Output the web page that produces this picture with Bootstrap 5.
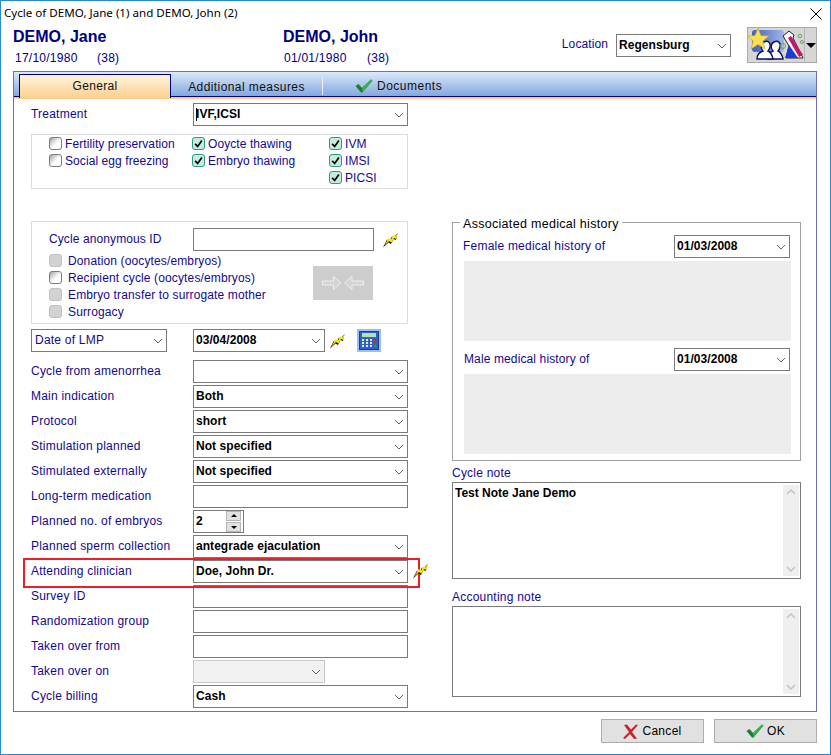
<!DOCTYPE html>
<html lang="en">
<head>
<meta charset="utf-8">
<title>Cycle</title>
<link href="https://cdn.jsdelivr.net/npm/bootstrap@5.3.0/dist/css/bootstrap.min.css" rel="stylesheet">
<style>
html,body{margin:0;background:#fff;font:12px/14px "Liberation Sans",Arial,sans-serif;color:#000}
.win{width:831px;height:755px;border:1px solid #2b87cf;overflow:hidden}
.ttl{height:24px;padding-left:3px;font-family:"Noto Sans",sans-serif;font-size:11.6px;line-height:24px}
.hdr{height:46px;padding-left:12px}
.pers{width:270px;color:#000080}
.pname{font-size:16px;font-weight:700;line-height:20px;margin-top:2px}
.pinfo{padding-left:2px;margin-top:4px;line-height:14px;letter-spacing:.25px;white-space:nowrap}
.pinfo2{padding-left:1px}
.pdate{display:inline-block;width:82px}
.pinfo2 .pdate{width:83px}
.loc{margin:2px 13px 0 auto;height:36px}
.lbl{color:#14088c;letter-spacing:.22px;white-space:nowrap}
.loclbl{margin:10px 8px 0 0;letter-spacing:.1px}
.sel,.inp{height:23px;border:1px solid #7a7a7a;border-radius:0;padding:0 16px 2px 2px;font-size:12px;line-height:20px;font-weight:700;color:#000;box-shadow:none;letter-spacing:.05px;background-color:#fff}
.inp{padding-right:2px}
.sel{background-size:10px 8px;background-position:right 3px center;background-image:url("data:image/svg+xml,%3csvg xmlns='http://www.w3.org/2000/svg' viewBox='0 0 10 6'%3e%3cpath fill='none' stroke='%23666' d='M1 1l4 4 4-4'/%3e%3c/svg%3e")}
.w115{width:115px;flex:none;margin-top:7px}.w116{width:116px;flex:none}.w215{width:215px;flex:none}.w181{width:181px;flex:none}.w132{width:132px;flex:none}.w136{width:136px;flex:none}
.lmpsel{padding-left:3px;font-weight:400;color:#14088c;letter-spacing:.22px}
.lmpwrap{width:162px;flex:none}
.iconbtn{width:70px;height:36px;background:#d6d6d6;border:1px solid #ababab;margin-left:16px;padding:0}
.iconbtn svg{display:block}
.iconsep{width:1px;height:34px;background:#f0f0f0;border-left:1px solid #b5b5b5}
.caretdn{width:0;border:5px solid transparent;border-top-color:#000;border-bottom:0;margin:0 auto}
.panel{width:804px;height:641px;margin-left:12px;border:1px solid #6f6fb5}
.tabbar{height:25px;background:linear-gradient(#dbe9fb,#83a8dd);border-bottom:1px solid #000080;box-shadow:0 2px 0 #fbd08f;padding:2px 0 0 5px;flex-wrap:nowrap}
.tabbar .nav-link{height:23px;padding:5px 0 0;color:#111;font-size:12px;line-height:15px;letter-spacing:.3px;text-align:center}
.tabbar .tabactive{width:152px;padding-top:4px;background:linear-gradient(#fff4dc,#fbd08f);border:1px solid #000080;border-bottom:0;height:24px}
.tabbar .tab2{width:152px;letter-spacing:.42px;height:18px;padding-top:3px;margin-top:3px;border-right:1px solid #e8eef8}
.tabbar .tab3{width:125px;padding:1px 0 0 32px;text-align:left;letter-spacing:.5px;gap:4px}
.body0{padding:4px 0 0 17px;margin-top:2px}
.lcol{width:377px;flex:none}
.frow{height:23px;margin-bottom:2px}
.frow>.lbl{width:162px;flex:none;padding-bottom:2px}
.frow.lmprow{margin-bottom:8px}
.grp{border:1px solid #dcdcdc}
.g1{height:55px;margin-top:8px;padding:0 0 0 17px}
.g1 .c1{width:143px}.g1 .c2{width:137px}
.ckrow{height:17px;white-space:nowrap;letter-spacing:.08px}
.ckrow .ck{margin:0 3px 0 0}
.ck{width:13px;height:13px;flex:none;margin:0;border:1px solid #7c7c7c;border-radius:3px;background-color:#fff;background-image:linear-gradient(135deg,#a4a4a4,#fff 55%);opacity:1!important}
.ck:checked{border-color:#2d9b84;background-color:#c8ecdc;background-image:url("data:image/svg+xml,%3csvg xmlns='http://www.w3.org/2000/svg' viewBox='0 0 13 13'%3e%3cpath fill='none' stroke='%23000' stroke-width='2' d='M2.500 7l3 3 5-7'/%3e%3c/svg%3e");background-size:100% 100%}
.ck:disabled{background:#d2d2d2;border-color:#c0c0c0}
.g2{height:103px;margin-top:32px;margin-bottom:5px;padding:6px 0 0 17px}
.g2 .frow{margin-bottom:1px}
.g2 .frow>.lbl{width:144px;letter-spacing:.1px}
.g2 .ckl{width:264px}
.g2 .ckrow .ck{margin-right:6px}
.g2 .ckrow{letter-spacing:.13px}
.mrg{width:60px;height:34px;background:#cdcdcd;margin-top:14px;border:0;padding:0;border-radius:0}
.bolt{width:16px;height:16px;flex:none;margin-left:8px}
.bolt4{margin-left:4px}
.calc{width:24px;height:23px;margin-left:12px;flex:none}
.spin{width:51px;height:23px;border:1px solid #7a7a7a;padding:0 2px;font-weight:700;font-size:12px;line-height:20px}
.spin .inn{width:32px;line-height:21px}
.spinb{width:15px}
.spinb span{height:10px;width:15px;background:#e1e1e1;border:1px solid #b5b5b5}
.spinb span:first-child{margin-bottom:1px}
.spinb i{display:block;width:0;border:3px solid transparent;border-bottom-color:#000;border-top:0;margin:2px auto 0}
.spinb span:last-child i{border-bottom:0;border-top:3px solid #000;margin-top:3px}
.form-select.dis{background-color:#f2f2f2;border-color:#c8c8c8}
.caretline{position:absolute;left:3px;top:5px;width:1px;height:13px;background:#000}
.redbox{position:absolute;left:22px;top:557px;width:397px;height:30px;border:2px solid #e8202c;pointer-events:none}
.boltred{position:absolute;left:411px;top:562px;margin:0}
.rcol{width:349px;margin-left:44px;flex:none}
.fs{border:1px solid #a0a0a0;margin:110px 0 0;padding:0 9px 0 10px;height:248px}
.fs legend{float:none;width:auto;font-size:12.5px;line-height:15px;height:19px;margin:0 0 0 -3px;padding:4px 3px 0;letter-spacing:.3px}
.frw{height:23px;width:327px;margin-top:3px}
.frw2{height:23px;width:327px;margin-top:7px}
.frw>.lbl{padding-bottom:2px}
.frw2>.lbl{padding:0 0 2px 1px;letter-spacing:.12px}
.fgrey{height:80px;background:#ededed;margin:3px 0 0 1px;width:327px}
.nlabel{margin-top:5px;line-height:14px}
.nlabel2{margin-top:11px}
.tx{border:1px solid #7a7a7a;margin-top:2px;padding:2px 1px 2px 2px}
.tx1{height:97px}.tx2{height:91px}
.tx textarea{resize:none;border:0;padding:1px 0 0;font-weight:700;font-size:12px;line-height:14px;box-shadow:none!important;border-radius:0;outline:0;height:100%;color:#000;overflow:hidden}
.sb{width:16px;flex:none;background:#efefef;padding:4px 3px}
.foot{padding:7px 13px 0 0;gap:10px}
.fbtn{width:103px;height:24px;background:#e1e1e1;border:1px solid #adadad;border-radius:0;padding:0;font-size:12px;line-height:14px;color:#000;letter-spacing:.3px}
.closex{position:absolute;left:809px;top:7px}
.ghost{width:0;height:0;position:absolute}
</style>
</head>
<body>
<svg class="ghost">
<symbol id="bolt" viewBox="0 0 16 16"><path d="M1 15.500l4-8 2.500 1.500 2.500-4.500 2 1L15.500 1 14 8l-2.500-1L9 12 6.500 10.500z" fill="#111"/><path d="M2.500 13.500L6.500 6l2.500 1.500L11.500 3l2 1.500L15.500 1 14.500 7l-2.500-1-2.500 4.500L7 9z" fill="#ffec00"/></symbol>
<symbol id="chk" viewBox="0 0 18 14"><path d="M.5 7l3-2 3.500 4L16 .5l1.500 1L7.500 13.500h-1.500z" fill="#187f33"/><path d="M7 9L16 .5l1.500 1-10 12z" fill="#3fae4e"/></symbol>
</svg>
<div class="win d-flex flex-column position-relative">
  <div class="ttl">Cycle of DEMO, Jane (1) and DEMO, John (2)</div>
  <svg class="closex" width="12" height="12" viewBox="0 0 12 12"><path d="M.5.5l11 11M11.500.5l-11 11" stroke="#000" fill="none"/></svg>
  <div class="hdr d-flex">
    <div class="pers"><div class="pname">DEMO, Jane</div><div class="pinfo"><span class="pdate">17/10/1980</span>(38)</div></div>
    <div class="pers"><div class="pname">DEMO, John</div><div class="pinfo pinfo2"><span class="pdate">01/01/1980</span>(38)</div></div>
    <div class="loc d-flex align-items-start">
      <span class="lbl loclbl">Location</span>
      <select class="form-select sel w115" aria-label="Location"><option>Regensburg</option></select>
      <button type="button" class="iconbtn d-flex" aria-label="Menu">
        <svg width="56" height="34" viewBox="0 0 56 34">
          <defs><linearGradient id="bgb" x1="0" x2="1"><stop offset="0" stop-color="#3f5fc0"/><stop offset="1" stop-color="#a3b6e6"/></linearGradient></defs>
          <rect x="4" y="2" width="32" height="22" rx="3" fill="url(#bgb)"/>
          <path d="M20 31c0-5 2-7 5-8-2-2-3-7 1-9 4-2 7 1 6 5-.5 2-1 3-2 4 2 1 4 3 5 8z" fill="#fff" stroke="#11115c" stroke-width="1.400"/>
          <path d="M9 31c0-5 3-7 6-8-2-2-3-7 1-9 4-2 7 1 6 5-.5 2-1 3-2 4 2 1 4 3 5 8z" fill="#fff" stroke="#11115c" stroke-width="1.400"/>
          <path d="M10 0l3 7.500 8 .5-6 5 2 8-7-4.500L3 21l2-8-6-5 8-.5z" fill="#f8e050" stroke="#c9a51e" stroke-width=".6"/>
          <path d="M35 8l6-5 5 4-1 3 10 20H38l3-12z" fill="#fff" stroke="#222"/>
          <path d="M41 17l9 13H37z" fill="#1a3bd6"/>
          <path d="M40 10l3-2 12 19-4 2z" fill="#c4166a"/>
          <circle cx="52" cy="8" r="1.800" fill="none" stroke="#65a565"/>
          <circle cx="54" cy="14" r="1.500" fill="none" stroke="#65a565"/>
          <circle cx="35" cy="18" r="2.500" fill="none" stroke="#65a565"/>
        </svg>
        <span class="iconsep"></span>
        <span class="flex-grow-1 align-self-center"><span class="caretdn d-block"></span></span>
      </button>
    </div>
  </div>
  <div class="panel d-flex flex-column">
    <ul class="nav tabbar">
      <li class="nav-item"><a class="nav-link tabactive" href="#">General</a></li>
      <li class="nav-item"><a class="nav-link tab2" href="#">Additional measures</a></li>
      <li class="nav-item"><a class="nav-link tab3 d-flex align-items-center" href="#"><svg width="18" height="14"><use href="#chk"/></svg>Documents</a></li>
    </ul>
    <div class="body0 d-flex">
      <div class="lcol">
        <div class="frow d-flex align-items-center"><span class="lbl">Treatment</span>
          <div class="position-relative"><select class="form-select sel w215" aria-label="Treatment"><option>IVF,ICSI</option></select><span class="caretline"></span></div></div>
        <div class="grp g1 d-flex">
          <div class="c1">
            <div class="ckrow d-flex align-items-center lbl"><input class="form-check-input ck" type="checkbox">Fertility preservation</div>
            <div class="ckrow d-flex align-items-center lbl"><input class="form-check-input ck" type="checkbox">Social egg freezing</div>
          </div>
          <div class="c2">
            <div class="ckrow d-flex align-items-center lbl"><input class="form-check-input ck" type="checkbox" checked>Ooycte thawing</div>
            <div class="ckrow d-flex align-items-center lbl"><input class="form-check-input ck" type="checkbox" checked>Embryo thawing</div>
          </div>
          <div>
            <div class="ckrow d-flex align-items-center lbl"><input class="form-check-input ck" type="checkbox" checked>IVM</div>
            <div class="ckrow d-flex align-items-center lbl"><input class="form-check-input ck" type="checkbox" checked>IMSI</div>
            <div class="ckrow d-flex align-items-center lbl"><input class="form-check-input ck" type="checkbox" checked>PICSI</div>
          </div>
        </div>
        <div class="grp g2">
          <div class="frow d-flex align-items-center"><span class="lbl">Cycle anonymous ID</span><input class="form-control inp w181" type="text" aria-label="Cycle anonymous ID"><svg class="bolt"><use href="#bolt"/></svg></div>
          <div class="d-flex">
            <div class="ckl">
              <div class="ckrow d-flex align-items-center lbl"><input class="form-check-input ck" type="checkbox" disabled>Donation (oocytes/embryos)</div>
              <div class="ckrow d-flex align-items-center lbl"><input class="form-check-input ck" type="checkbox">Recipient cycle (oocytes/embryos)</div>
              <div class="ckrow d-flex align-items-center lbl"><input class="form-check-input ck" type="checkbox" disabled>Embryo transfer to surrogate mother</div>
              <div class="ckrow d-flex align-items-center lbl"><input class="form-check-input ck" type="checkbox" disabled>Surrogacy</div>
            </div>
            <button type="button" class="btn mrg d-flex align-items-center justify-content-center" aria-label="Merge">
              <svg width="42" height="16" viewBox="0 0 42 16"><path d="M.5 6h11V1.500L19 8l-7.500 6.500V10H.5zM41.500 6H30V1.500L22.500 8l7.500 6.500V10h11.500z" fill="#d4d4d4" stroke="#eeeeee"/></svg>
            </button>
          </div>
        </div>
        <div class="frow d-flex align-items-center lmprow">
          <div class="lmpwrap"><select class="form-select sel w136 lmpsel" aria-label="Date type"><option>Date of LMP</option></select></div>
          <select class="form-select sel w132" aria-label="Date"><option>03/04/2008</option></select>
          <svg class="bolt bolt4"><use href="#bolt"/></svg>
          <svg class="calc" viewBox="0 0 24 23"><rect width="24" height="23" fill="#9cc0ee"/><rect x="2.500" y="2.500" width="19" height="18" fill="#2f62c8" stroke="#1f3f88"/><rect x="5" y="4" width="14" height="4" fill="#b8e0b0"/><path d="M5 10h2v2H5zM9 10h2v2H9zM13 10h2v2h-2zM5 13h2v2H5zM9 13h2v2H9zM13 13h2v2h-2zM5 16h2v2H5zM9 16h2v2H9zM13 16h2v2h-2z" fill="#dfeaff"/><path d="M17 10h2v2h-2zM17 13h2v2h-2z" fill="#d22"/><path d="M17 16h2v2h-2z" fill="#2a2"/></svg>
        </div>
        <div class="frow d-flex align-items-center"><span class="lbl">Cycle from amenorrhea</span><select class="form-select sel w215" aria-label="Cycle from amenorrhea"><option></option></select></div>
        <div class="frow d-flex align-items-center"><span class="lbl">Main indication</span><select class="form-select sel w215" aria-label="Main indication"><option>Both</option></select></div>
        <div class="frow d-flex align-items-center"><span class="lbl">Protocol</span><select class="form-select sel w215" aria-label="Protocol"><option>short</option></select></div>
        <div class="frow d-flex align-items-center"><span class="lbl">Stimulation planned</span><select class="form-select sel w215" aria-label="Stimulation planned"><option>Not specified</option></select></div>
        <div class="frow d-flex align-items-center"><span class="lbl">Stimulated externally</span><select class="form-select sel w215" aria-label="Stimulated externally"><option>Not specified</option></select></div>
        <div class="frow d-flex align-items-center"><span class="lbl">Long-term medication</span><input class="form-control inp w215" type="text" aria-label="Long-term medication"></div>
        <div class="frow d-flex align-items-center"><span class="lbl">Planned no. of embryos</span>
          <div class="spin d-flex align-items-center"><span class="inn">2</span><div class="spinb d-flex flex-column"><span class="d-block"><i></i></span><span class="d-block"><i></i></span></div></div></div>
        <div class="frow d-flex align-items-center"><span class="lbl">Planned sperm collection</span><select class="form-select sel w215" aria-label="Planned sperm collection"><option>antegrade ejaculation</option></select></div>
        <div class="frow d-flex align-items-center"><span class="lbl">Attending clinician</span><select class="form-select sel w215" aria-label="Attending clinician"><option>Doe, John Dr.</option></select></div>
        <div class="frow d-flex align-items-center"><span class="lbl">Survey ID</span><input class="form-control inp w215" type="text" aria-label="Survey ID"></div>
        <div class="frow d-flex align-items-center"><span class="lbl">Randomization group</span><input class="form-control inp w215" type="text" aria-label="Randomization group"></div>
        <div class="frow d-flex align-items-center"><span class="lbl">Taken over from</span><input class="form-control inp w215" type="text" aria-label="Taken over from"></div>
        <div class="frow d-flex align-items-center"><span class="lbl">Taken over on</span><select class="form-select sel w132 dis" disabled aria-label="Taken over on"><option></option></select></div>
        <div class="frow d-flex align-items-center"><span class="lbl">Cycle billing</span><select class="form-select sel w215" aria-label="Cycle billing"><option>Cash</option></select></div>
      </div>
      <div class="rcol">
        <fieldset class="fs">
          <legend>Associated medical history</legend>
          <div class="frw d-flex align-items-center justify-content-between"><span class="lbl">Female medical history of</span><select class="form-select sel w116" aria-label="Female medical history of"><option>01/03/2008</option></select></div>
          <div class="fgrey"></div>
          <div class="frw2 d-flex align-items-center justify-content-between"><span class="lbl">Male medical history of</span><select class="form-select sel w116" aria-label="Male medical history of"><option>01/03/2008</option></select></div>
          <div class="fgrey"></div>
        </fieldset>
        <div class="lbl nlabel">Cycle note</div>
        <div class="tx tx1 d-flex"><textarea class="form-control" aria-label="Cycle note">Test Note Jane Demo</textarea>
          <div class="sb d-flex flex-column justify-content-between"><svg width="10" height="6" viewBox="0 0 10 6"><path d="M1 5l4-4 4 4" fill="none" stroke="#c4c4c4" stroke-width="1.500"/></svg><svg width="10" height="6" viewBox="0 0 10 6"><path d="M1 1l4 4 4-4" fill="none" stroke="#c4c4c4" stroke-width="1.500"/></svg></div></div>
        <div class="lbl nlabel nlabel2">Accounting note</div>
        <div class="tx tx2 d-flex"><textarea class="form-control" aria-label="Accounting note"></textarea>
          <div class="sb d-flex flex-column justify-content-between"><svg width="10" height="6" viewBox="0 0 10 6"><path d="M1 5l4-4 4 4" fill="none" stroke="#c4c4c4" stroke-width="1.500"/></svg><svg width="10" height="6" viewBox="0 0 10 6"><path d="M1 1l4 4 4-4" fill="none" stroke="#c4c4c4" stroke-width="1.500"/></svg></div></div>
      </div>
    </div>
  </div>
  <div class="foot d-flex justify-content-end">
    <button type="button" class="btn fbtn d-flex align-items-center justify-content-center gap-1"><svg width="16" height="15" viewBox="0 0 16 15"><path d="M1 1l3-.5 4 5 5-5 2 .5-6 7 5 6.500-3 .5-4-5-5 5-2-1 6-6z" fill="#c1272d"/></svg>Cancel</button>
    <button type="button" class="btn fbtn d-flex align-items-center justify-content-center gap-1"><svg width="18" height="14"><use href="#chk"/></svg>OK</button>
  </div>
  <div class="redbox"></div>
  <svg class="bolt boltred"><use href="#bolt"/></svg>
</div>
<script src="https://cdn.jsdelivr.net/npm/bootstrap@5.3.0/dist/js/bootstrap.bundle.min.js"></script>
</body>
</html>
